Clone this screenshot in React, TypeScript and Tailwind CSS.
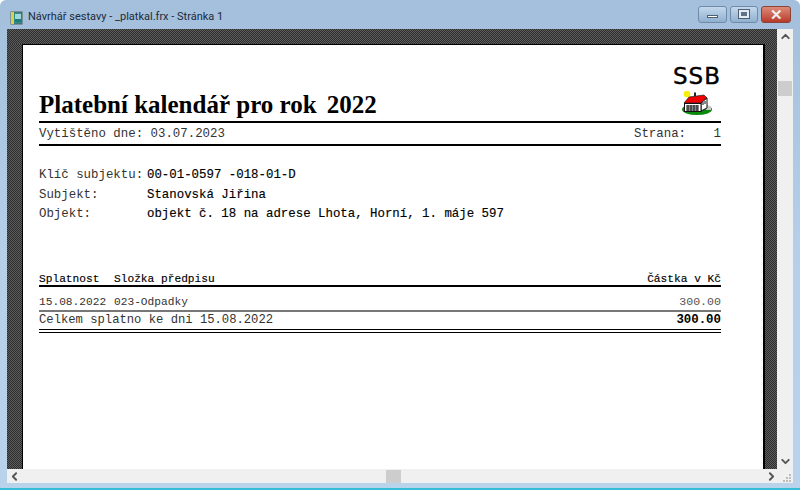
import { ChevronUp, ChevronDown, ChevronLeft, ChevronRight } from 'lucide-react';

function AppIcon() {
  return (
    <svg width="13" height="14" viewBox="0 0 13 14" className="shrink-0">
      <rect x="1" y="1" width="11" height="12" fill="#2f8f8f" stroke="#55605a" />
      <rect x="1" y="1" width="3" height="12" fill="#d8d24a" />
      <rect x="5" y="3" width="6" height="8" fill="#9fd8d8" />
      <rect x="5" y="8" width="6" height="3" fill="#207a7a" />
    </svg>
  );
}

function House() {
  return (
    <svg width="30" height="24" viewBox="0 0 30 24">
      <ellipse cx="15" cy="18.5" rx="15" ry="5.5" fill="#0a8a0a" />
      <rect x="24" y="15" width="5" height="4" fill="#c8c8c8" />
      <circle cx="5" cy="3" r="3.3" fill="#f8f000" />
      <rect x="12" y="1.5" width="2" height="4" fill="#222" />
      <path d="M2 12 L7 6 L22 4 L25 7 L19 12 Z" fill="#f00000" stroke="#222" strokeWidth="0.7" />
      <path d="M19 12 L25 7 L25 17 L19 20 Z" fill="#fff" stroke="#111" strokeWidth="1" />
      <path d="M21 11v3M23 10v3" stroke="#111" />
      <rect x="2.5" y="12.5" width="16.5" height="8" fill="#fff" stroke="#111" />
      <path d="M4 15h13M4 17h13M4 19h13M6 14v6M9 14v6M12 14v6M15 14v6" stroke="#111" strokeWidth="1" />
    </svg>
  );
}

function Grip() {
  return (
    <svg width="9" height="9" viewBox="0 0 9 9" className="shrink-0">
      <path d="M6 0h2v2H6zM3 3h2v2H3zM6 3h2v2H6zM0 6h2v2H0zM3 6h2v2H3zM6 6h2v2H6z" fill="#bdbdbd" />
    </svg>
  );
}

function Hatch({ className }: { className: string }) {
  return (
    <div
      className={`shrink-0 bg-[repeating-conic-gradient(#2e2e2e_0%_25%,#5c5c5c_0%_50%)] bg-[length:2px_2px] ${className}`}
    />
  );
}

export default function App() {
  return (
    <div className="flex h-[490px] w-[800px] flex-col overflow-hidden rounded-t-[6px] border-b-2 border-[#35bcd6] bg-gradient-to-b from-[#a3bfdb] via-[#b5cfe9] to-[#b9d3ec] font-['Liberation_Mono',monospace] text-[12.4px] text-[#333]">
      {/* title bar */}
      <div className="flex h-[29px] shrink-0 items-center pl-[10px] pr-[9px] pt-[6px]">
        <AppIcon />
        <span className="ml-[5px] font-['Roboto',sans-serif] text-[11px] text-[#1c2a3a]">Návrhář sestavy - _platkal.frx - Stránka 1</span>
        <div className="mb-[7px] ml-auto flex gap-[3px]">
          <div className="flex h-[17px] w-[29px] items-end justify-center rounded-[3px] border border-[#6f8aa8] bg-gradient-to-b from-[#c4d8ec] to-[#8fb0d0] pb-[4px]">
            <div className="h-[3px] w-[11px] border border-[#4f5f70] bg-white" />
          </div>
          <div className="flex h-[17px] w-[28px] items-center justify-center rounded-[3px] border border-[#6f8aa8] bg-gradient-to-b from-[#c4d8ec] to-[#8fb0d0]">
            <div className="h-[8px] w-[10px] border-2 border-[#e4edf5] bg-[#5f7488] outline outline-1 outline-[#4f5f70]" />
          </div>
          <div className="flex h-[17px] w-[30px] items-center justify-center rounded-[3px] border border-[#8a4438] bg-gradient-to-b from-[#dc8a78] to-[#b8392a] font-['Liberation_Sans',sans-serif] text-[15px] font-bold leading-none text-[#eeeeee]">
            ✕
          </div>
        </div>
      </div>

      {/* client area */}
      <div className="mx-[7px] flex min-h-0 flex-1 flex-col">
        <div className="flex min-h-0 flex-1">
          <div className="flex min-w-0 flex-1 flex-col">
            <Hatch className="h-[15px]" />
            <div className="flex min-h-0 flex-1">
              <Hatch className="w-[15px]" />
              <div className="flex-1 border-l border-r-2 border-t border-black bg-white pl-[16px] pr-[42px] pt-[43px]">
                <div className="flex h-[31px] items-end justify-between">
                  <div className="font-['Liberation_Serif',serif] text-[25px] font-bold leading-[28px] text-black">
                    Platební kalendář pro rok <span className="ml-[4px]">2022</span>
                  </div>
                  <div className="mb-[4px] mr-[-1px] flex w-[50px] flex-col items-center">
                    <div className="mb-[2px] mt-[-32px] font-['DejaVu_Sans',sans-serif] text-[23px] leading-[26px] tracking-[1px] text-black [-webkit-text-stroke:0.4px_black]">SSB</div>
                    <House />
                  </div>
                </div>
                <div className="mt-[2px] flex h-[25px] items-center justify-between border-y-2 border-black pt-[2px]">
                  <span>Vytištěno dne: 03.07.2023</span>
                  <span className="flex w-[87px] justify-between"><span>Strana:</span><span>1</span></span>
                </div>

                <div className="mt-[20px] flex flex-col leading-[19.5px]">
                  <div className="flex"><span className="w-[108px]">Klíč subjektu:</span><span className="text-black [-webkit-text-stroke:0.15px_black]">00-01-0597 -018-01-D</span></div>
                  <div className="flex"><span className="w-[108px]">Subjekt:</span><span className="text-black [-webkit-text-stroke:0.15px_black]">Stanovská Jiřina</span></div>
                  <div className="flex"><span className="w-[108px]">Objekt:</span><span className="text-black [-webkit-text-stroke:0.15px_black]">objekt č. 18 na adrese Lhota, Horní, 1. máje 597</span></div>
                </div>

                <div className="mt-[49px] flex h-[13px] items-center justify-between border-b-2 border-black text-[11.2px] text-black [-webkit-text-stroke:0.15px_black]">
                  <div className="flex"><span className="w-[75px]">Splatnost</span><span>Složka předpisu</span></div>
                  <span>Částka v Kč</span>
                </div>
                <div className="mt-[8px] flex h-[17px] items-center justify-between border-b-2 border-[#777] text-[11.2px]">
                  <div className="flex"><span className="w-[75px]">15.08.2022</span><span>023-Odpadky</span></div>
                  <span className="text-[11.6px] text-[#555]">300.00</span>
                </div>
                <div className="flex h-[17px] items-center justify-between text-[12.2px]">
                  <span>Celkem splatno ke dni 15.08.2022</span>
                  <span className="text-[12.4px] font-bold text-black">300.00</span>
                </div>
                <div className="h-[4px] border-y border-black" />
              </div>
              <Hatch className="w-[12px]" />
            </div>
          </div>
          {/* vertical scrollbar */}
          <div className="flex w-[16px] shrink-0 flex-col items-center bg-[#f0f0f0] pt-[1px]">
            <ChevronUp size={13} strokeWidth={3.5} className="text-[#555]" />
            <div className="mt-[38px] h-[15px] w-[14px] bg-[#cdcdcd]" />
            <ChevronDown size={13} strokeWidth={3.5} className="mb-[1px] mt-auto text-[#555]" />
          </div>
        </div>
        {/* horizontal scrollbar */}
        <div className="flex h-[14px] shrink-0 items-center bg-[#f0f0f0] pl-[1px]">
          <ChevronLeft size={13} strokeWidth={3.5} className="text-[#555]" />
          <div className="ml-[365px] h-[13px] w-[15px] bg-[#cdcdcd]" />
          <ChevronRight size={13} strokeWidth={3.5} className="ml-auto mr-[5px] text-[#555]" />
          <div className="mr-[1px] flex h-full w-[9px] items-end"><Grip /></div>
        </div>
      </div>
      <div className="h-[5px] shrink-0" />
    </div>
  );
}
